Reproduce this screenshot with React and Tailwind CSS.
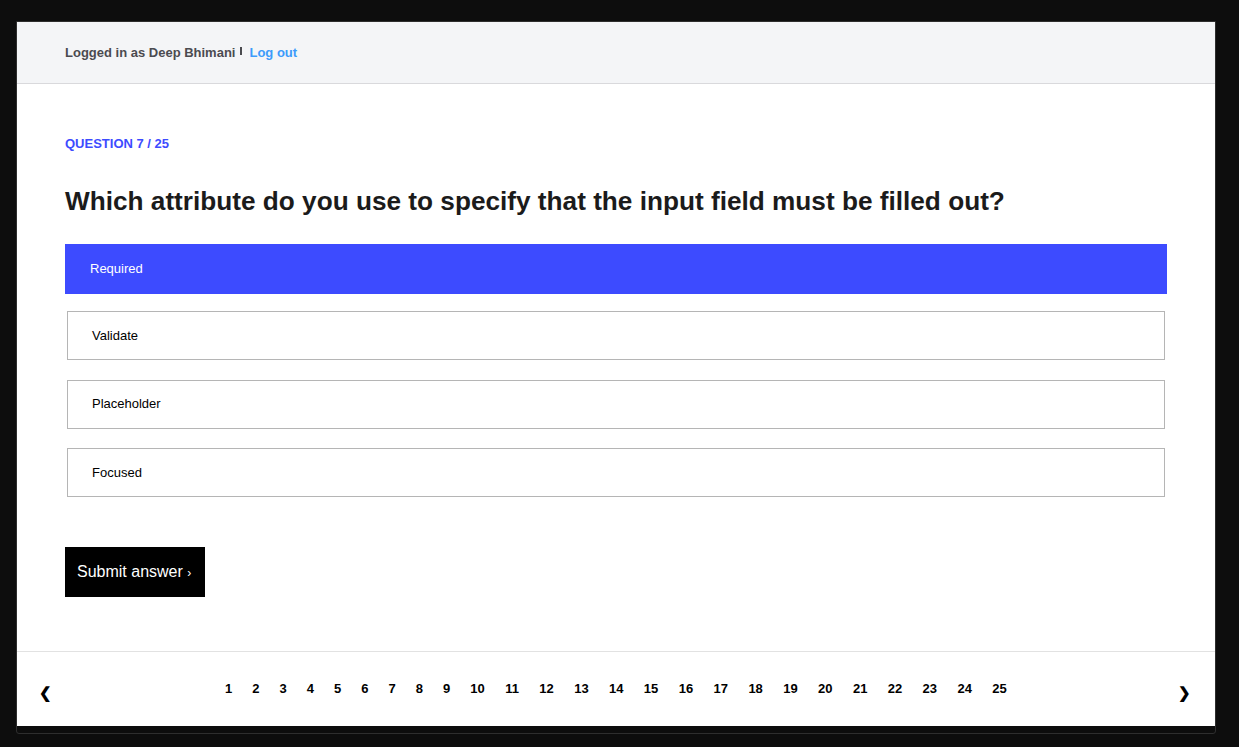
import { useState } from 'react';

const options = ['Required', 'Validate', 'Placeholder', 'Focused'];
const pages = Array.from({ length: 25 }, (_, i) => i + 1);

export default function App() {
  const [selected, setSelected] = useState(0);

  return (
    <div className="h-screen bg-[#0d0d0d] pt-[21px] px-[16px] font-['Liberation_Sans',Arial,sans-serif]">
      <div className="w-[1200px] border border-[#2e2e2e] rounded-b-[3px] pb-[7px] overflow-hidden">
        <div className="bg-white">
          {/* header */}
          <div className="h-[62px] bg-[#f4f5f7] border-b border-[#d9d9dc] flex items-center pl-[48px]">
            <span className="text-[13px] font-bold text-[#4b4b50]">Logged in as Deep Bhimani</span>
            <span className="inline-block w-[2px] h-[8px] bg-[#4b4b50] ml-[5px] mr-[7px] -mt-[3px]"></span>
            <a href="#" className="text-[13px] font-bold text-[#3d9bfb]">Log out</a>
          </div>

          {/* question */}
          <div className="pl-[48px] pr-[48px] pt-[52px] pb-[54px]">
            <p className="text-[13px] leading-[16px] font-bold text-[#3d4bff] uppercase">Question 7 / 25</p>
            <h1 className="mt-[34px] text-[26.2px] leading-[30px] font-bold text-[#1b1b1b]">
              Which attribute do you use to specify that the input field must be filled out?
            </h1>

            <div className="mt-[28px] flex flex-col">
              {options.map((opt, i) => (
                <button
                  key={opt}
                  onClick={() => setSelected(i)}
                  className={
                    i === selected
                      ? 'h-[50px] w-full bg-[#3d4bff] text-white text-[13px] text-left pl-[25px] mb-[17px]'
                      : 'h-[49px] mx-[2px] border border-[#b5b5b5] bg-white text-black text-[13px] text-left pl-[24px] mb-[19.5px]'
                  }
                >
                  {opt}
                </button>
              ))}
            </div>

            <button className="mt-[30px] h-[50px] w-[140px] bg-black text-white text-[16px] text-left pl-[12px]">
              Submit answer <span className="text-[12px]">›</span>
            </button>
          </div>

          {/* pagination */}
          <div className="h-[75px] border-t border-[#e2e2e2] grid grid-cols-[1fr_auto_1fr] items-center px-[22px]">
            <span className="text-[15px] font-bold text-black mt-[9px]">❮</span>
            <div className="flex items-center">
              {pages.map((p) => (
                <span
                  key={p}
                  className={`${p < 10 ? 'px-[10px]' : 'px-[10.2px]'} text-[13px] font-bold text-black cursor-pointer`}
                >
                  {p}
                </span>
              ))}
            </div>
            <span className="text-[15px] font-bold text-black mt-[9px] text-right pr-[2px]">❯</span>
          </div>
        </div>
      </div>
    </div>
  );
}
